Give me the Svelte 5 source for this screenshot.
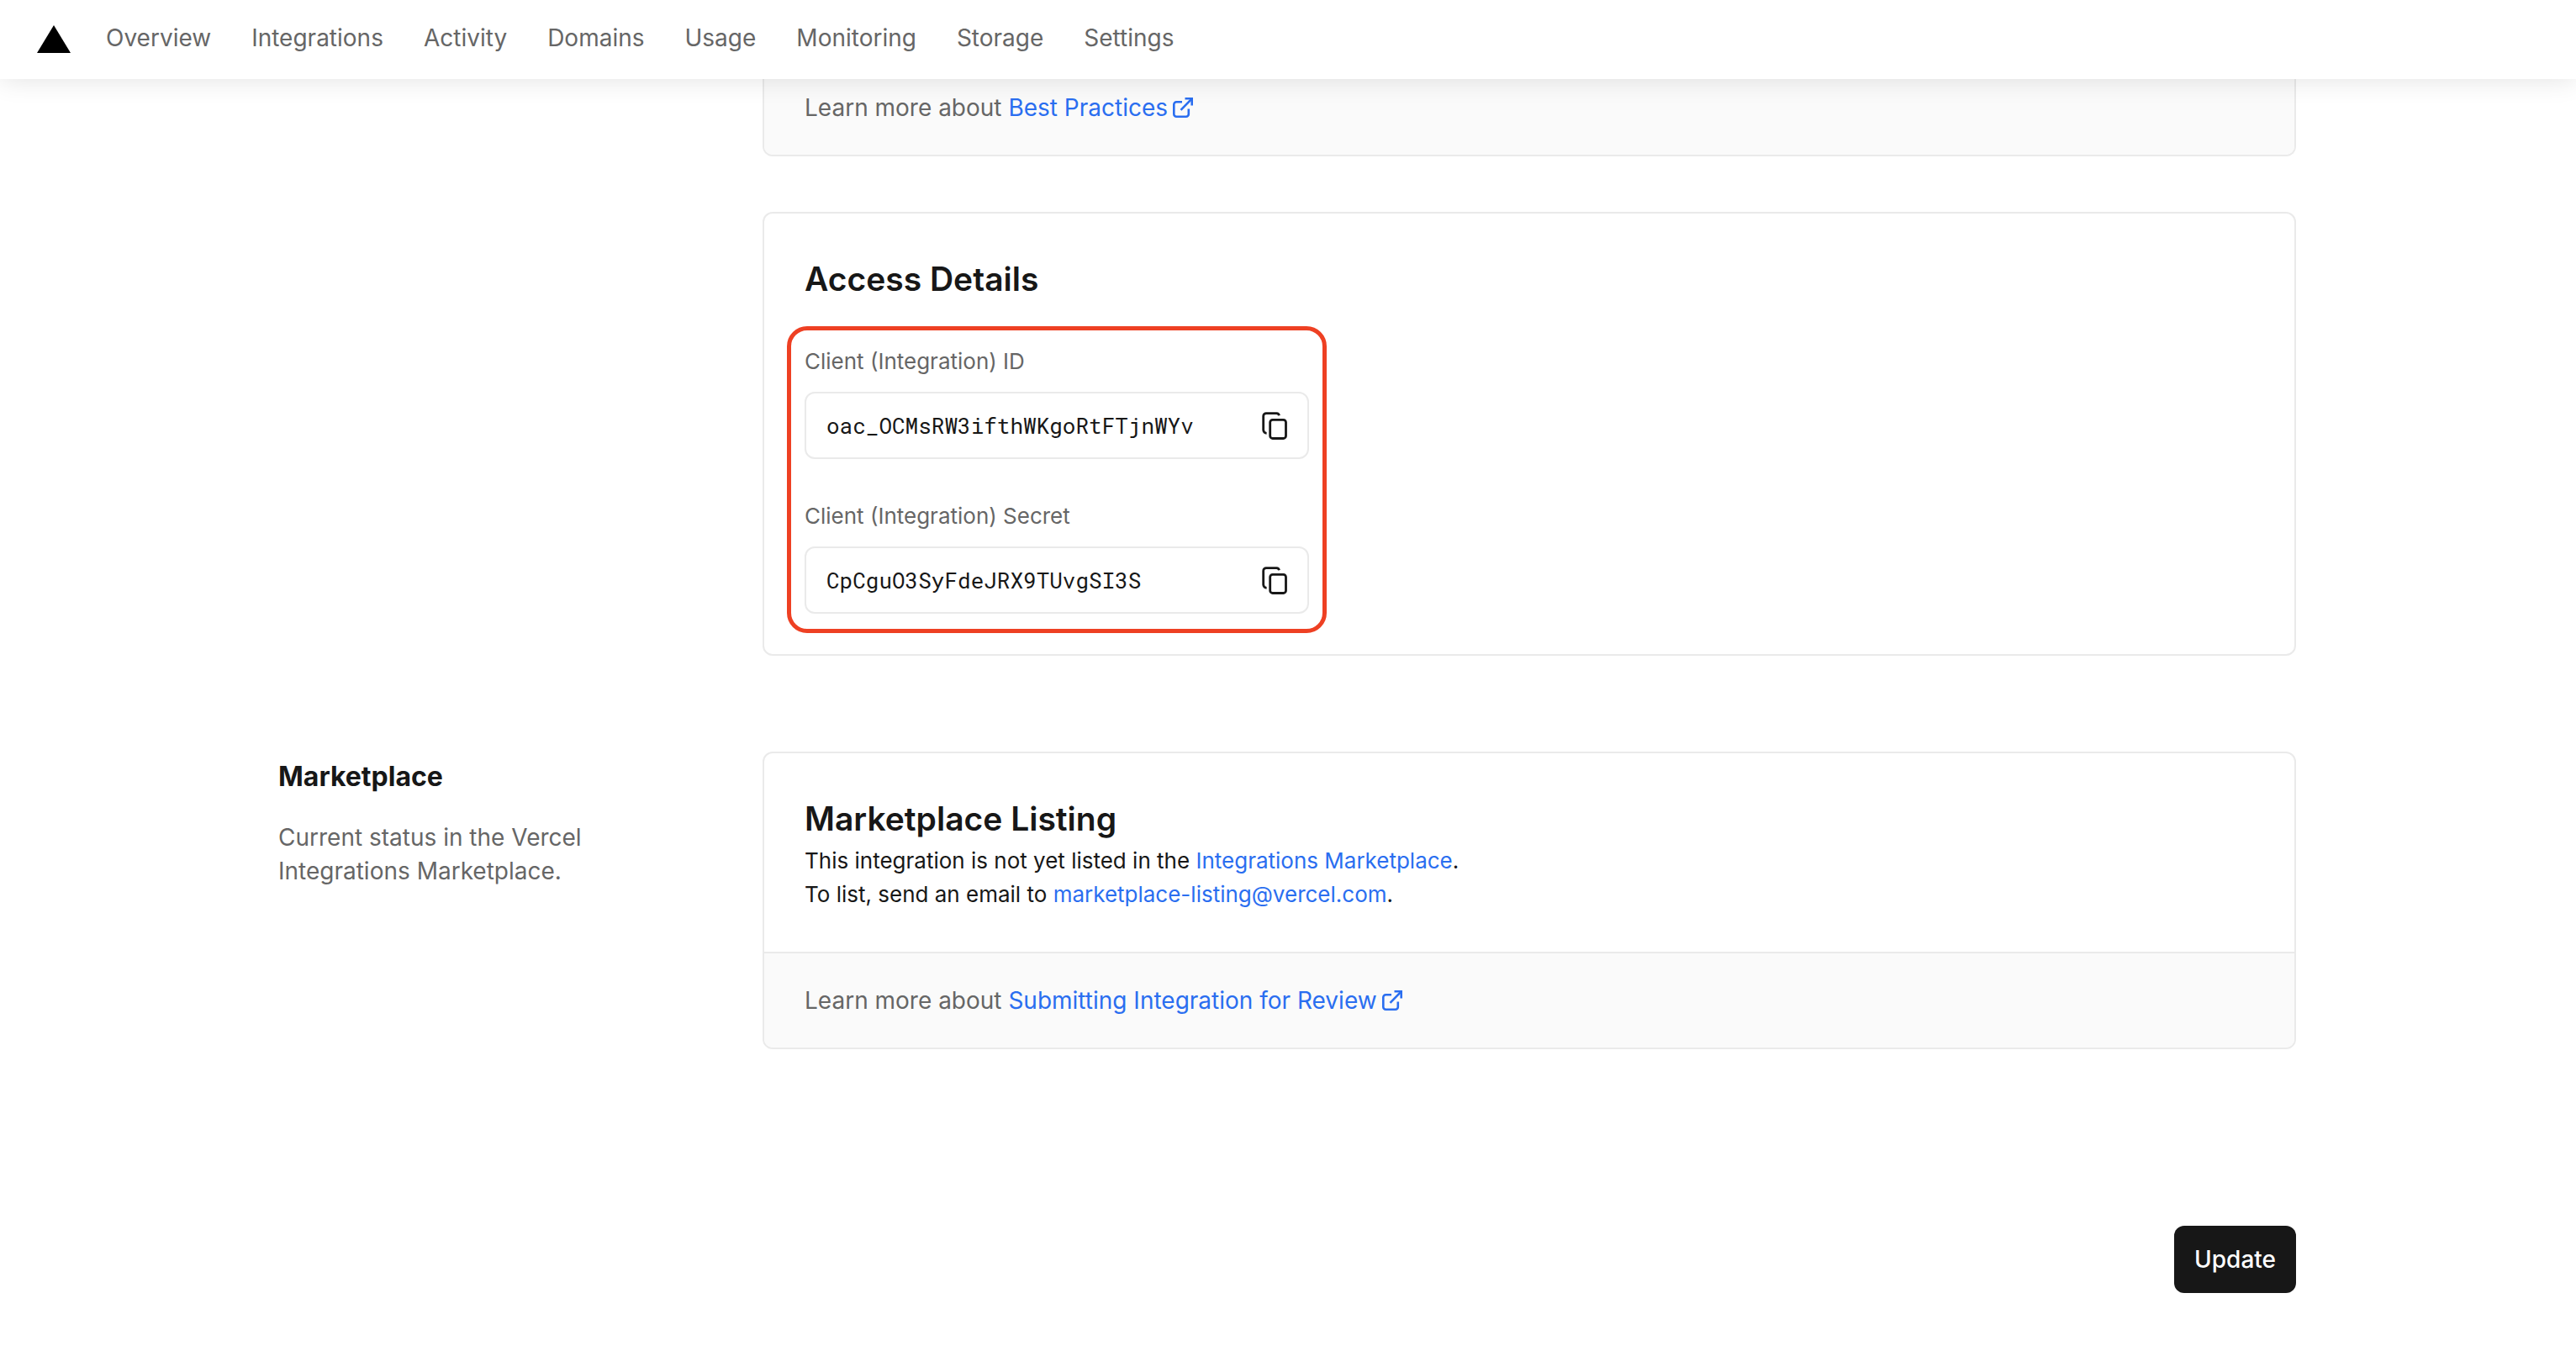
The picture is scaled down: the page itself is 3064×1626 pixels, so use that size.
<script>
  const nav = ['Overview', 'Integrations', 'Activity', 'Domains', 'Usage', 'Monitoring', 'Storage', 'Settings'];
  const fields = [
    { id: 'client-id', label: 'Client (Integration) ID', value: 'oac_OCMsRW3ifthWKgoRtFTjnWYv' },
    { id: 'client-secret', label: 'Client (Integration) Secret', value: 'CpCguO3SyFdeJRX9TUvgSI3S' }
  ];
</script>

{#snippet external()}
  <svg class="external" viewBox="0 0 24 24" aria-hidden="true">
    <path d="M11 5.2H4.3a3 3 0 0 0-3 3v11.5a3 3 0 0 0 3 3h11.5a3 3 0 0 0 3-3V13.5" />
    <path d="M14.5 1.3h8.2v8.2" />
    <path d="M9.5 14.8L22.2 1.8" />
  </svg>
{/snippet}

<header>
  <a class="logo" href="#home" aria-label="Home">
    <svg viewBox="0 0 40 33"><path d="M20 0L40 33H0z" /></svg>
  </a>
  <nav>
    {#each nav as item}
      <a href="#{item.toLowerCase()}">{item}</a>
    {/each}
  </nav>
</header>

<main>
  <div class="row first">
    <section class="card practices">
      <footer>Learn more about <a href="#practices">Best Practices{@render external()}</a></footer>
    </section>
  </div>

  <div class="row access">
    <section class="card">
      <div class="body">
        <h3>Access Details</h3>
        <div class="highlight">
          {#each fields as field}
            <div class="field">
              <label for={field.id}>{field.label}</label>
              <div class="box">
                <input id={field.id} value={field.value} readonly />
                <button class="copy" type="button" aria-label="Copy {field.label}">
                  <svg viewBox="0 0 30 33" aria-hidden="true">
                    <path d="M5.6 25.3A4 4 0 0 1 1.7 21.5V5a3.4 3.4 0 0 1 3.4-3.4h12.4a3.2 3.2 0 0 1 3 2.6" />
                    <rect x="9.7" y="9.3" width="18.8" height="22.2" rx="3" />
                  </svg>
                </button>
              </div>
            </div>
          {/each}
        </div>
      </div>
    </section>
  </div>

  <div class="row market">
    <aside>
      <h2>Marketplace</h2>
      <p>Current status in the Vercel Integrations Marketplace.</p>
    </aside>
    <section class="card">
      <div class="body">
        <h3>Marketplace Listing</h3>
        <p>This integration is not yet listed in the <a href="#marketplace">Integrations Marketplace</a>.</p>
        <p>To list, send an email to <a href="mailto:marketplace-listing@vercel.com">marketplace-listing@vercel.com</a>.</p>
      </div>
      <footer>Learn more about <a href="#review">Submitting Integration for Review{@render external()}</a></footer>
    </section>
  </div>

  <div class="actions">
    <button class="update" type="button">Update</button>
  </div>
</main>

<style>
  :global(body) {
    background: #fff;
    color: #171717;
    font-family: Inter, 'Liberation Sans', sans-serif;
    font-size: 28px;
    line-height: 40px;
  }
  h2, h3, p {
    margin: 0;
  }
  a {
    color: #2a6ef0;
    text-decoration: none;
  }
  header {
    position: sticky;
    top: 0;
    z-index: 1;
    display: flex;
    align-items: center;
    gap: 42px;
    height: 92px;
    padding: 0 44px 2px;
    background: #fff;
    box-shadow: 0 0 30px rgba(0, 0, 0, 0.12);
  }
  .logo svg {
    display: block;
    width: 40px;
    height: 33px;
    fill: #000;
  }
  nav {
    display: flex;
    gap: 48px;
    padding-bottom: 2px;
  }
  nav a {
    color: #666;
  }
  main {
    max-width: 2400px;
    margin: 0 auto;
    padding: 0 2px 88px 0;
  }
  .row {
    display: grid;
    grid-template-columns: 528px 1fr;
    column-gap: 48px;
  }
  .first .card, .access .card {
    grid-column: 2;
  }
  .card {
    overflow: hidden;
    border: 2px solid #eaeaea;
    border-radius: 12px;
    background: #fff;
  }
  .practices {
    border-top: 0;
    border-radius: 0 0 12px 12px;
  }
  .body {
    padding: 48px;
  }
  .card footer {
    padding: 36px 48px;
    border-top: 2px solid #eaeaea;
    background: #fafafa;
    color: #666;
  }
  .practices footer {
    padding-top: 14px;
    border-top: 0;
  }
  .external {
    width: 24px;
    height: 24px;
    margin-left: 6px;
    vertical-align: -2px;
    fill: none;
    stroke: currentColor;
    stroke-width: 2.6;
    stroke-linejoin: miter;
  }
  h3 {
    font-size: 39px;
    line-height: 60px;
    font-weight: 600;
  }
  h2 {
    font-size: 32px;
    line-height: 48px;
    font-weight: 700;
  }
  .body p {
    font-size: 26px;
  }
  .access {
    margin-top: 66px;
  }
  .access .body {
    padding-bottom: 25px;
  }
  .highlight {
    box-sizing: border-box;
    display: flex;
    flex-direction: column;
    gap: 48px;
    width: 642px;
    max-width: 100%;
    margin: 26px 0 0 -21px;
    padding: 17px 16px 18px;
    border: 5px solid #ee4023;
    border-radius: 24px;
  }
  .field {
    display: flex;
    flex-direction: column;
    gap: 16px;
  }
  label {
    color: #666;
    font-size: 26px;
    line-height: 40px;
  }
  .box {
    box-sizing: border-box;
    display: flex;
    align-items: center;
    height: 80px;
    padding: 0 24px;
    border: 2px solid #eaeaea;
    border-radius: 12px;
  }
  input {
    flex: 1;
    min-width: 0;
    padding: 0;
    border: 0;
    background: none;
    color: #171717;
    font: 26px/40px 'Roboto Mono', 'Liberation Mono', monospace;
    outline: none;
  }
  .copy {
    padding: 0;
    border: 0;
    background: none;
  }
  .copy svg {
    display: block;
    width: 30px;
    height: 33px;
    fill: none;
    stroke: #171717;
    stroke-width: 2.8;
    stroke-linecap: butt;
  }
  .market {
    margin-top: 114px;
  }
  aside {
    padding-top: 6px;
  }
  aside p {
    max-width: 420px;
    margin-top: 28px;
    color: #666;
  }
  .actions {
    display: flex;
    justify-content: flex-end;
    margin-top: 210px;
  }
  .update {
    height: 80px;
    padding: 0 24px;
    border: 0;
    border-radius: 12px;
    background: #171717;
    color: #fff;
    font: 500 28px/40px Inter, 'Liberation Sans', sans-serif;
  }
</style>
